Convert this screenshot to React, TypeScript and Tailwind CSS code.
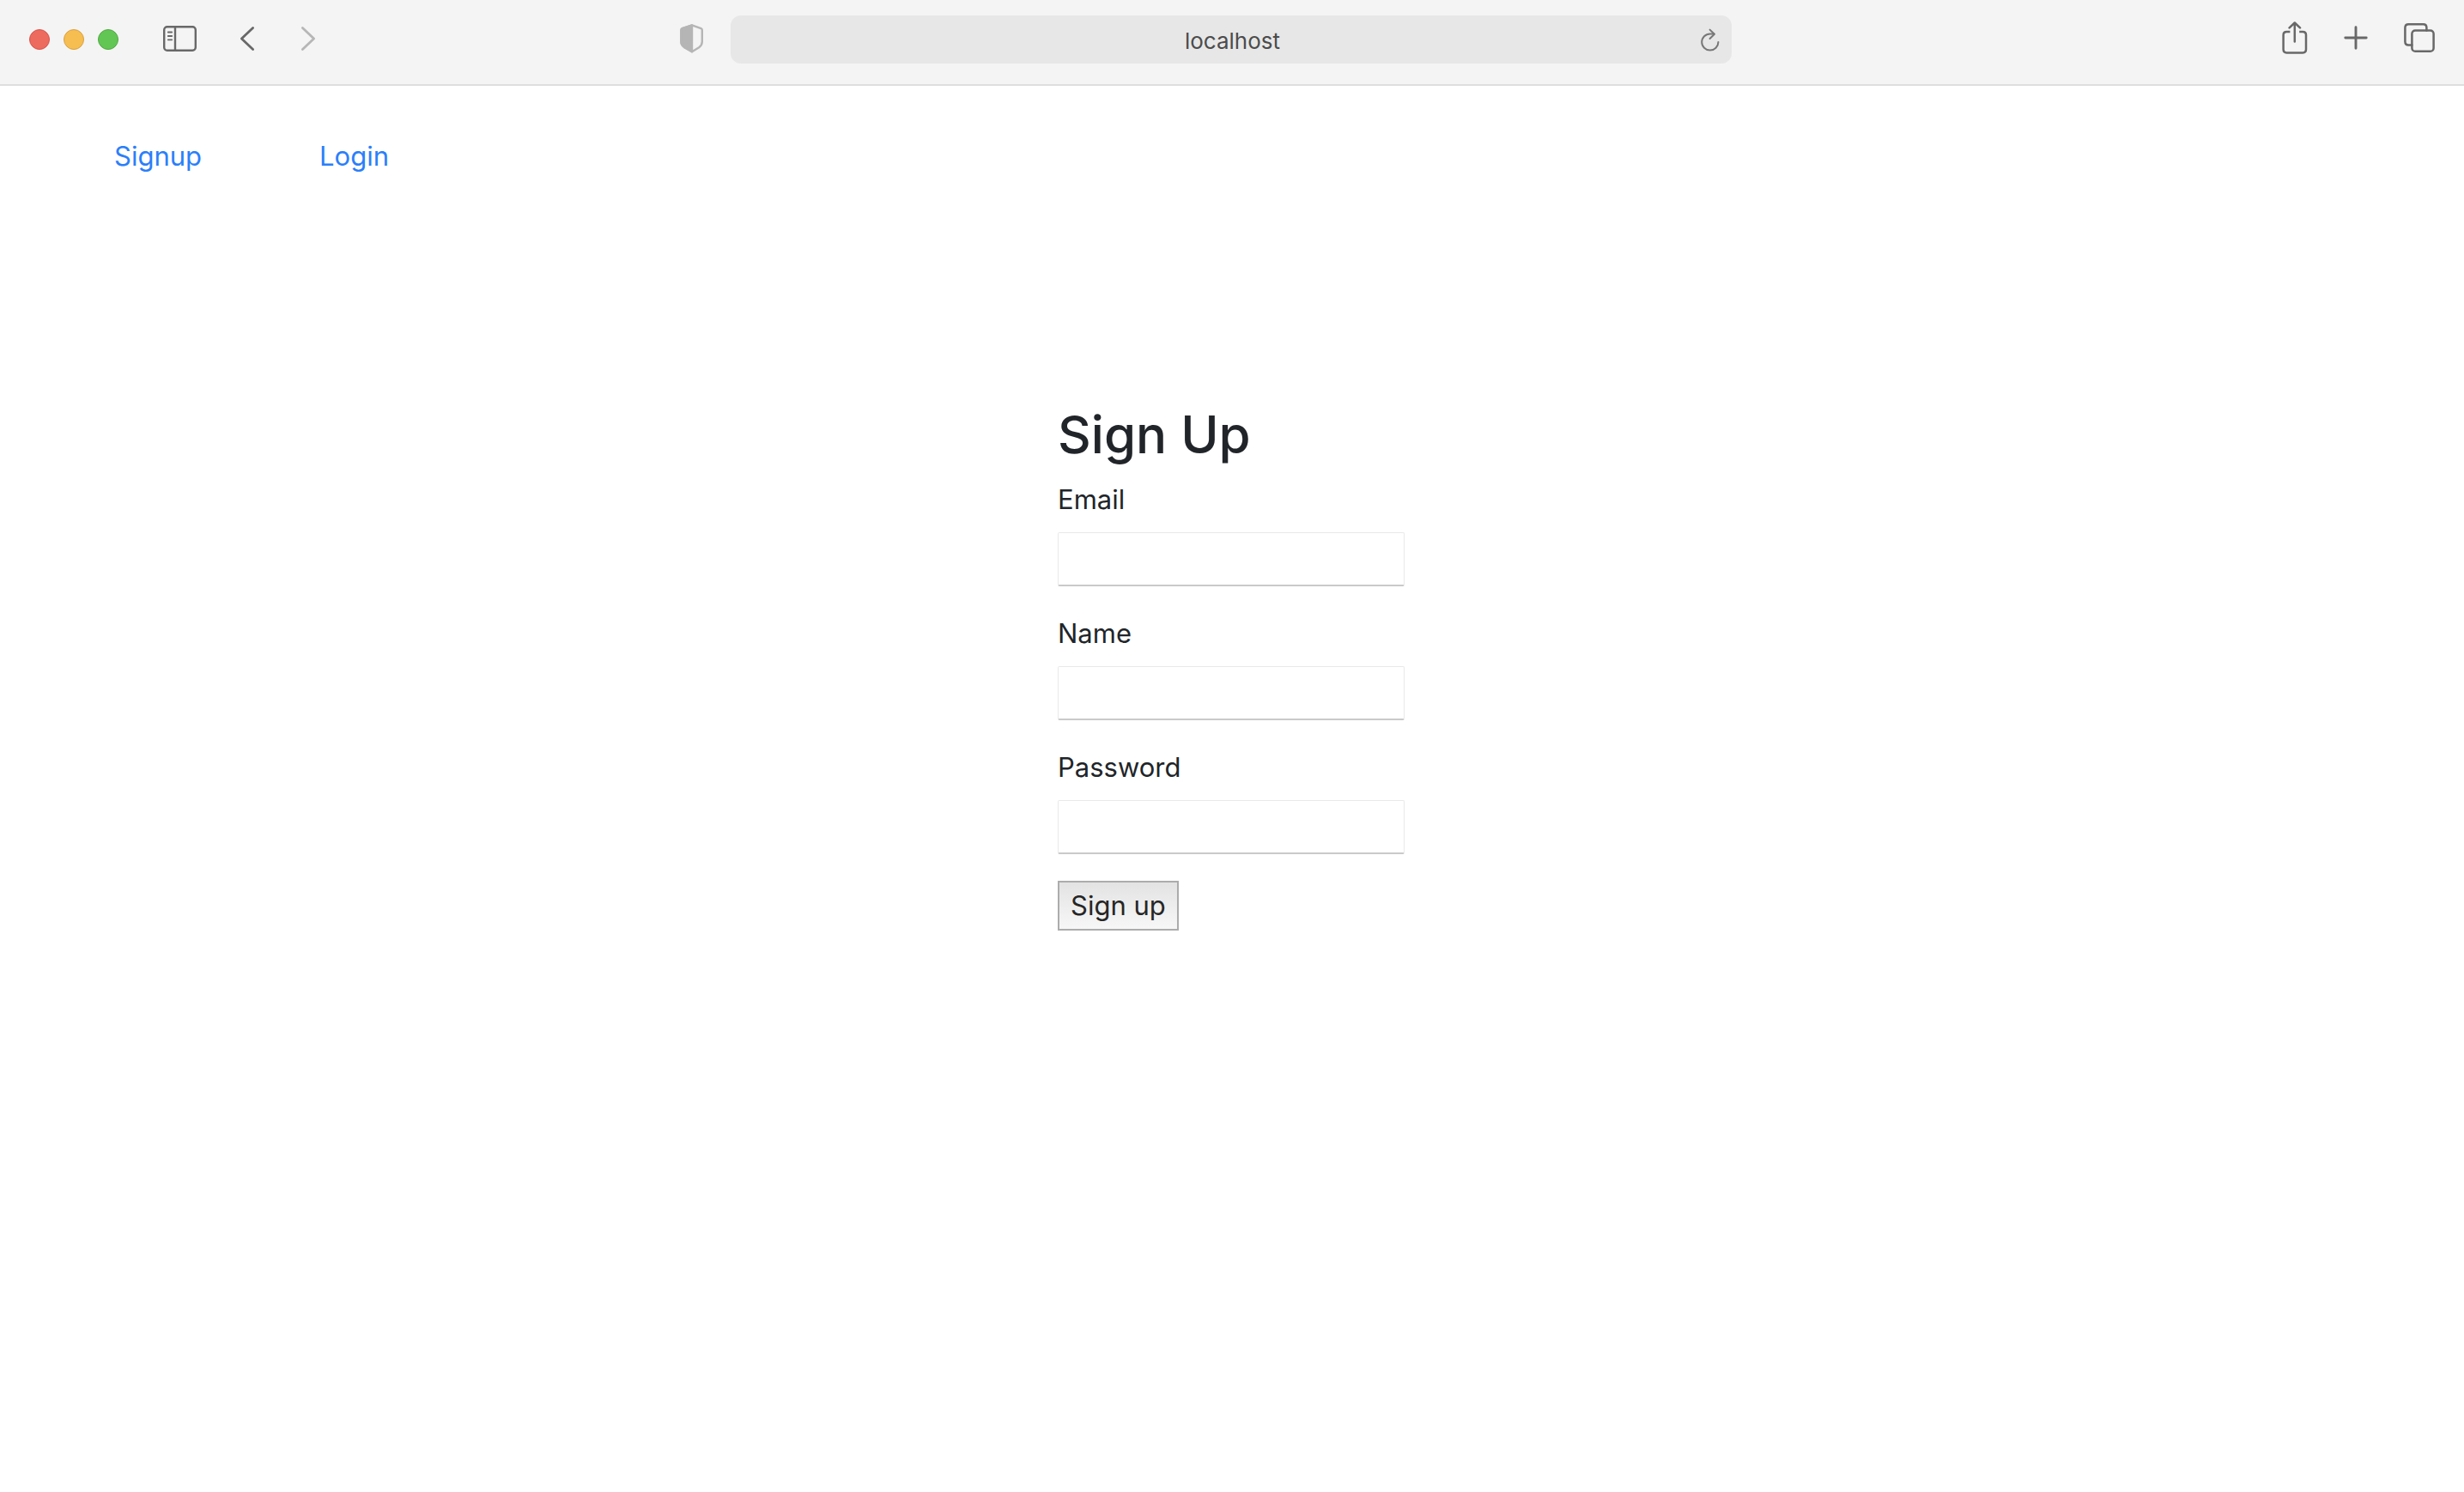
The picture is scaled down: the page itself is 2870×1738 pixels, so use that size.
import React from "react";

const stroke = {
  fill: "none",
  stroke: "currentColor",
  strokeLinecap: "round" as const,
  strokeLinejoin: "round" as const,
};

function SidebarIcon() {
  return (
    <svg width="40" height="30" viewBox="0 0 40 30" {...stroke}>
      <rect x="1.2" y="1.2" width="36.6" height="27.6" rx="3.5" strokeWidth="2.4" />
      <path d="M14 1.5V28.5" strokeWidth="2.4" />
      <path d="M5.8 7.5H10.2M5.8 12H10.2M5.8 16.3H10.2" strokeWidth="1.8" />
    </svg>
  );
}

function Chevron({ forward }: { forward?: boolean }) {
  return (
    <svg width="18" height="30" viewBox="0 0 18 30" {...stroke} strokeWidth="2.8">
      <path d={forward ? "M2.4 2.4L15.6 15L2.4 27.6" : "M15.6 2.4L2.4 15L15.6 27.6"} />
    </svg>
  );
}

function ShieldIcon() {
  return (
    <svg width="28" height="34" viewBox="0 0 28 34" {...stroke} strokeWidth="2.4">
      <path d="M14 1.4L24.6 5.2Q25.8 5.7 25.8 7V20.5Q25.8 24.6 22.2 27.2L14 32.2L5.3 27.2Q1.4 24.6 1.4 20.5V7Q1.4 5.7 2.6 5.2Z" />
      <path d="M14 1.4L2.6 5.2Q1.4 5.7 1.4 7V20.5Q1.4 24.6 5.3 27.2L14 32.2Z" fill="currentColor" />
    </svg>
  );
}

function ReloadIcon() {
  return (
    <svg width="22" height="28" viewBox="0 0 22 28" {...stroke} strokeWidth="2">
      <path d="M20.4 16A9.6 9.6 0 1 1 10.8 6.4H15.5" />
      <path d="M10.6 1.6L15.9 6.8L10.6 12" />
    </svg>
  );
}

function ShareIcon() {
  return (
    <svg width="30" height="38" viewBox="0 0 30 38" {...stroke} strokeWidth="2.5">
      <path d="M9.4 12H5.4Q1.6 12 1.6 15.8V32.6Q1.6 36.4 5.4 36.4H24.2Q28 36.4 28 32.6V15.8Q28 12 24.2 12H20.2" strokeLinecap="butt" />
      <path d="M14.8 23.6V2M8.6 7.4L14.8 1.5L21 7.4" />
    </svg>
  );
}

function PlusIcon() {
  return (
    <svg width="28" height="28" viewBox="0 0 28 28" {...stroke} strokeWidth="2.9">
      <path d="M1.8 14H26.2M14 1.8V26.2" />
    </svg>
  );
}

function TabsIcon() {
  return (
    <svg width="36" height="34" viewBox="0 0 36 34" {...stroke} strokeWidth="2.5">
      <path d="M9.4 25.4H5.4Q1.4 25.4 1.4 21.4V5.2Q1.4 1.3 5.4 1.3H22.6Q26.4 1.3 26.4 5.2V8.4" />
      <rect x="9.4" y="8.4" width="25.2" height="24.3" rx="3.8" />
    </svg>
  );
}

function BrowserBar() {
  return (
    <header className="grid h-[100px] grid-cols-[851fr_1166fr_853fr] border-b-2 border-[#dedede] bg-[#f4f4f4] text-[#686868]">
      <div className="flex h-[90px] items-center justify-between pr-[31px] pl-[34px]">
        <div className="flex items-center">
          <div className="mt-0.5 flex gap-4">
            <button aria-label="Close" className="size-6 rounded-full border border-[#d9534a] bg-[#ed6a5f]" />
            <button aria-label="Minimize" className="size-6 rounded-full border border-[#d9a040] bg-[#f6be50]" />
            <button aria-label="Zoom" className="size-6 rounded-full border border-[#52a842] bg-[#62c655]" />
          </div>
          <button aria-label="Show sidebar" className="ml-[52px]"><SidebarIcon /></button>
          <button aria-label="Back" className="ml-[49px]"><Chevron /></button>
          <button aria-label="Forward" className="ml-[53px] text-[#b6b6b6]"><Chevron forward /></button>
        </div>
        <button aria-label="Privacy report" className="text-[#b5b5b5]"><ShieldIcon /></button>
      </div>
      <div className="mt-[18px] flex h-14 items-center rounded-xl bg-[#e7e7e7] pr-3.5 pl-[51px]">
        <input
          aria-label="Address"
          defaultValue="localhost"
          className="mt-1 min-w-0 flex-1 bg-transparent text-center text-[26px] leading-8 text-[#4c4c4c] outline-none"
        />
        <button aria-label="Reload" className="mt-0.5 ml-3 text-[#777777]"><ReloadIcon /></button>
      </div>
      <div className="flex h-[88px] items-center justify-end pr-[34px]">
        <button aria-label="Share" className="mr-[42px]"><ShareIcon /></button>
        <button aria-label="New tab" className="mr-[42px]"><PlusIcon /></button>
        <button aria-label="Tab overview"><TabsIcon /></button>
      </div>
    </header>
  );
}

const fields = [
  { id: "email", label: "Email", type: "email" },
  { id: "name", label: "Name", type: "text" },
  { id: "password", label: "Password", type: "password" },
];

export default function App() {
  return (
    <div className="min-h-screen bg-white font-['Inter',sans-serif] text-[31px] leading-[48px] text-[#212529]">
      <BrowserBar />
      <nav className="flex gap-[137px] pt-[58px] pl-[133px] text-[#2b7ffa]">
        <a href="#signup">Signup</a>
        <a href="#login">Login</a>
      </nav>
      <main className="pt-[262px]">
        <form className="mx-auto w-[406px]" onSubmit={(e) => e.preventDefault()}>
          <h1 className="mb-3.5 text-[60px] leading-[76px] font-medium">Sign Up</h1>
          <div className="flex flex-col gap-[31px]">
            {fields.map((f) => (
              <div key={f.id}>
                <label htmlFor={f.id} className="mb-3.5 block">{f.label}</label>
                <input
                  id={f.id}
                  type={f.type}
                  className="block h-[63px] w-[404px] rounded-xs border border-b-2 border-[#e9e9e9] border-b-[#cacaca] bg-white px-2 outline-none"
                />
              </div>
            ))}
          </div>
          <button
            type="submit"
            className="mt-[31px] block h-[58px] border-2 border-[#acacac] bg-linear-to-b from-[#e3e3e3] to-[#f7f7f7] px-[13px] leading-[54px] text-[#262626]"
          >
            Sign up
          </button>
        </form>
      </main>
    </div>
  );
}
